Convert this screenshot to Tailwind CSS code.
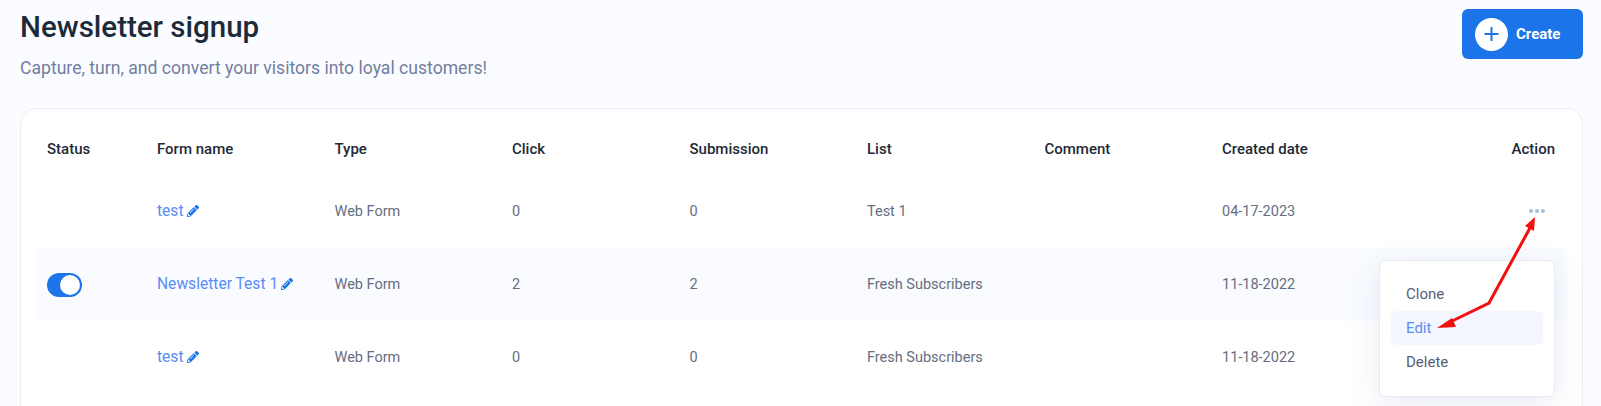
<!doctype html>
<html>
  <head>
    <meta charset="UTF-8" />
    <script src="https://cdn.jsdelivr.net/npm/@tailwindcss/browser@4"></script>
  </head>
  <body class="bg-[#fbfcff] font-['Roboto',sans-serif] overflow-hidden h-[406px]">
    <div class="relative h-[406px] overflow-hidden pl-[20px] pr-[18px]">
      <div class="flex justify-between items-start h-[108px]">
        <div>
          <h1 class="text-[29.5px] leading-[36px] font-medium text-[#1c2a3a] mt-[9px]">Newsletter signup</h1>
          <p class="text-[17.6px] leading-[24px] text-[#7180a0] mt-[11px]">Capture, turn, and convert your visitors into loyal customers!</p>
        </div>
        <button class="mt-[9px] w-[121px] h-[50px] bg-[#1b74e8] rounded-[6px] flex items-center pl-[13px] text-white text-[15px] font-bold">
          <span class="w-[33px] h-[33px] rounded-full bg-white flex items-center justify-center mr-[8px]">
            <svg width="16" height="16" viewBox="0 0 16 16"><path d="M7.5 1v14M0.5 8h14" stroke="#1b74e8" stroke-width="2" /></svg>
          </span>
          Create
        </button>
      </div>

      <div class="bg-white border border-[#eceef1] rounded-[16px] h-[320px] px-[15px]">
        <div class="grid grid-cols-[110px_repeat(7,177.5px)_1fr] items-center h-[66px] pt-[14px] pl-[11px] pr-[12px] text-[15px] font-medium text-[#1f2a37]">
          <div>Status</div><div>Form name</div><div>Type</div><div>Click</div><div>Submission</div><div>List</div><div>Comment</div><div>Created date</div><div class="text-right">Action</div>
        </div>

        <div class="grid grid-cols-[110px_repeat(7,177.5px)_1fr] items-center h-[73px] pl-[11px] pr-[11px] text-[14.5px] text-[#656e7f]">
          <div></div>
          <div class="flex items-center gap-[3px] text-[15.6px] text-[#5a8df5]">test
            <svg class="w-[12px] h-[12px]" viewBox="0 0 512 512" fill="#1b74e8"><path d="M497.9 142.1l-46.1 46.1c-4.7 4.7-12.3 4.7-17 0l-111-111c-4.7-4.7-4.7-12.3 0-17l46.1-46.1c18.7-18.7 49.1-18.7 67.9 0l60.1 60.1c18.8 18.7 18.8 49.1 0 67.9zM284.2 99.8L21.6 362.4.4 483.9c-2.9 16.4 11.4 30.6 27.8 27.8l121.5-21.3 262.6-262.6c4.7-4.7 4.7-12.3 0-17l-111-111c-4.8-4.7-12.4-4.7-17.1 0zM124.1 339.9c-5.5-5.5-5.5-14.3 0-19.8l154-154c5.5-5.5 14.3-5.5 19.8 0s5.5 14.3 0 19.8l-154 154c-5.5 5.5-14.3 5.5-19.8 0zM88 424h48v36.3l-64.5 11.3-31.1-31.1L51.7 376H88v48z"/></svg>
          </div>
          <div>Web Form</div><div>0</div><div>0</div><div>Test 1</div><div></div><div>04-17-2023</div>
          <div class="flex justify-end gap-[2px] pr-[11px] mb-[2px]">
            <span class="w-[4px] h-[4px] rounded-full bg-[#a9c0d4]"></span><span class="w-[4px] h-[4px] rounded-full bg-[#a9c0d4]"></span><span class="w-[4px] h-[4px] rounded-full bg-[#a9c0d4]"></span>
          </div>
        </div>

        <div class="grid grid-cols-[110px_repeat(7,177.5px)_1fr] items-center h-[73px] pl-[11px] pr-[11px] text-[14.5px] text-[#656e7f] bg-[#f9fbff]">
          <div>
            <div class="w-[35px] h-[24px] rounded-full bg-[#1b74e8] flex items-center justify-end pr-[2px]">
              <span class="w-[20px] h-[20px] rounded-full bg-white"></span>
            </div>
          </div>
          <div class="flex items-center gap-[3px] text-[15.6px] text-[#5a8df5]">Newsletter Test 1
            <svg class="w-[12px] h-[12px]" viewBox="0 0 512 512" fill="#1b74e8"><path d="M497.9 142.1l-46.1 46.1c-4.7 4.7-12.3 4.7-17 0l-111-111c-4.7-4.7-4.7-12.3 0-17l46.1-46.1c18.7-18.7 49.1-18.7 67.9 0l60.1 60.1c18.8 18.7 18.8 49.1 0 67.9zM284.2 99.8L21.6 362.4.4 483.9c-2.9 16.4 11.4 30.6 27.8 27.8l121.5-21.3 262.6-262.6c4.7-4.7 4.7-12.3 0-17l-111-111c-4.8-4.7-12.4-4.7-17.1 0zM124.1 339.9c-5.5-5.5-5.5-14.3 0-19.8l154-154c5.5-5.5 14.3-5.5 19.8 0s5.5 14.3 0 19.8l-154 154c-5.5 5.5-14.3 5.5-19.8 0zM88 424h48v36.3l-64.5 11.3-31.1-31.1L51.7 376H88v48z"/></svg>
          </div>
          <div>Web Form</div><div>2</div><div>2</div><div>Fresh Subscribers</div><div></div><div>11-18-2022</div><div></div>
        </div>

        <div class="grid grid-cols-[110px_repeat(7,177.5px)_1fr] items-center h-[73px] pl-[11px] pr-[11px] text-[14.5px] text-[#656e7f]">
          <div></div>
          <div class="flex items-center gap-[3px] text-[15.6px] text-[#5a8df5]">test
            <svg class="w-[12px] h-[12px]" viewBox="0 0 512 512" fill="#1b74e8"><path d="M497.9 142.1l-46.1 46.1c-4.7 4.7-12.3 4.7-17 0l-111-111c-4.7-4.7-4.7-12.3 0-17l46.1-46.1c18.7-18.7 49.1-18.7 67.9 0l60.1 60.1c18.8 18.7 18.8 49.1 0 67.9zM284.2 99.8L21.6 362.4.4 483.9c-2.9 16.4 11.4 30.6 27.8 27.8l121.5-21.3 262.6-262.6c4.7-4.7 4.7-12.3 0-17l-111-111c-4.8-4.7-12.4-4.7-17.1 0zM124.1 339.9c-5.5-5.5-5.5-14.3 0-19.8l154-154c5.5-5.5 14.3-5.5 19.8 0s5.5 14.3 0 19.8l-154 154c-5.5 5.5-14.3 5.5-19.8 0zM88 424h48v36.3l-64.5 11.3-31.1-31.1L51.7 376H88v48z"/></svg>
          </div>
          <div>Web Form</div><div>0</div><div>0</div><div>Fresh Subscribers</div><div></div><div>11-18-2022</div><div></div>
        </div>
      </div>

      <!-- dropdown menu -->
      <div class="absolute left-[1379px] top-[260px] w-[176px] h-[137px] bg-white border border-[#e8eaef] rounded-[6px] shadow-[0_8px_30px_rgba(130,150,190,0.18)] px-[11px] py-[16px] text-[15px] text-[#566078]">
        <div class="h-[34px] flex items-center px-[15px]">Clone</div>
        <div class="h-[34px] flex items-center px-[15px] rounded-[6px] bg-[#f3f6fe] text-[#5a8df5]">Edit</div>
        <div class="h-[34px] flex items-center px-[15px]">Delete</div>
      </div>

      <!-- annotation arrows -->
      <svg class="absolute left-0 top-0 pointer-events-none" width="1601" height="406" viewBox="0 0 1601 406">
        <path d="M1531 226 L1489 303 L1446 324" fill="none" stroke="#f40f0f" stroke-width="3" />
        <path d="M1535 217 L1534 231 L1525 226 Z" fill="#f40f0f" />
        <path d="M1437 328 L1452 318 L1456 327 Z" fill="#f40f0f" />
      </svg>
    </div>
  </body>
</html>
